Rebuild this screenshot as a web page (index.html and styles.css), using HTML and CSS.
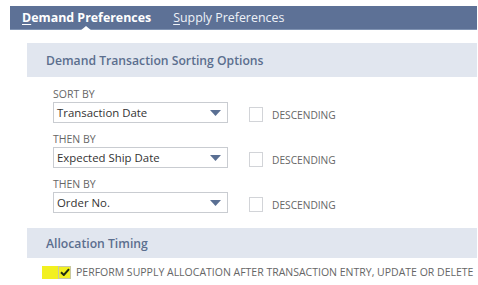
FILE: index.html
```html
<!DOCTYPE html>
<html>
<head>
<meta charset="utf-8">
<link rel="stylesheet" href="styles.css">
</head>
<body>
<div class="page">
  <div class="tabs">
    <div class="tab active"><u>D</u>emand Preferences</div>
    <div class="tab"><u>S</u>upply Preferences</div>
  </div>
  <div class="content">
    <div class="section-head">Demand Transaction Sorting Options</div>
    <div class="rows">
      <div class="row">
        <div class="field">
          <div class="label">SORT BY</div>
          <div class="select"><span>Transaction Date</span><svg class="arrow" width="11" height="6" viewBox="0 0 11 6"><path d="M0 0H11L5.5 6Z" fill="#5a6f93"/></svg></div>
        </div>
        <label class="check"><span class="box"></span>DESCENDING</label>
      </div>
      <div class="row">
        <div class="field">
          <div class="label">THEN BY</div>
          <div class="select"><span>Expected Ship Date</span><svg class="arrow" width="11" height="6" viewBox="0 0 11 6"><path d="M0 0H11L5.5 6Z" fill="#5a6f93"/></svg></div>
        </div>
        <label class="check"><span class="box"></span>DESCENDING</label>
      </div>
      <div class="row">
        <div class="field">
          <div class="label">THEN BY</div>
          <div class="select"><span>Order No.</span><svg class="arrow" width="11" height="6" viewBox="0 0 11 6"><path d="M0 0H11L5.5 6Z" fill="#5a6f93"/></svg></div>
        </div>
        <label class="check"><span class="box"></span>DESCENDING</label>
      </div>
    </div>
    <div class="section-head alloc">Allocation Timing</div>
    <div class="perform">
      <span class="hl"></span>
      <span class="box checked"><svg width="10" height="8" viewBox="0 0 10 8"><path d="M1 4.2L3.8 7L9 1.2" fill="none" stroke="#1f2a12" stroke-width="2"/></svg></span>
      <span class="ptext">PERFORM SUPPLY ALLOCATION AFTER TRANSACTION ENTRY, UPDATE OR DELETE</span>
    </div>
  </div>
</div>
</body>
</html>
```
FILE: styles.css
```css
html, body {
  margin: 0;
  padding: 0;
  background: #fff;
}
body {
  font-family: "Open Sans", "Liberation Sans", sans-serif;
  width: 478px;
  height: 285px;
  overflow: hidden;
}
.page {
  padding-top: 6px;
  padding-left: 10px;
}
.tabs {
  height: 24px;
  background: #5d7196;
  border-bottom: 1px solid #8093b2;
  box-sizing: border-box;
  display: flex;
  align-items: center;
  padding-left: 12px;
  gap: 22px;
  margin-right: 1px;
}
.tab {
  color: #eef2f8;
  font-size: 12.4px;
  line-height: 24px;
  position: relative;
}
.tab u {
  text-decoration: underline;
  text-underline-offset: 2px;
}
.tab.active {
  color: #fff;
  font-weight: 700;
}
.tab.active::after {
  content: "";
  position: absolute;
  left: 58px;
  bottom: -1px;
  width: 0;
  height: 0;
  border-left: 6px solid transparent;
  border-right: 6px solid transparent;
  border-bottom: 5px solid #fff;
}
.content {
  padding-top: 13px;
  padding-left: 17px;
}
.section-head {
  height: 34px;
  background: #e1e6ef;
  color: #5b6e8e;
  font-size: 12.2px;
  font-weight: 600;
  display: flex;
  align-items: center;
  padding-left: 19px;
  margin-right: 1px;
}
.rows {
  padding-left: 26px;
  padding-top: 11px;
  display: flex;
  flex-direction: column;
  gap: 10px;
}
.row {
  display: flex;
  align-items: flex-end;
  gap: 21px;
}
.label {
  font-size: 10.5px;
  color: #666;
  line-height: 13px;
  height: 13px;
}
.select {
  width: 175px;
  height: 21px;
  box-sizing: border-box;
  border: 1px solid #c9ccd1;
  display: flex;
  align-items: center;
  justify-content: space-between;
  padding: 0 6px 0 3px;
  font-size: 11.4px;
  color: #333;
  margin-top: 1px;
}
.arrow {
  display: block;
}
.check {
  display: flex;
  align-items: center;
  font-size: 10.2px;
  color: #666;
  gap: 9px;
  height: 21px;
  margin-bottom: -2px;
}
.box {
  width: 14px;
  height: 15px;
  box-sizing: border-box;
  border: 1px solid #d2d4d8;
  background: #fff;
  display: inline-block;
}
.section-head.alloc {
  margin-top: 15px;
  height: 30px;
}
.perform {
  position: relative;
  display: flex;
  align-items: center;
  padding-left: 31px;
  padding-top: 7px;
  gap: 5px;
}
.hl {
  position: absolute;
  left: 15px;
  top: 8px;
  width: 28px;
  height: 13px;
  background: #f2f020;
}
.box.checked {
  position: relative;
  width: 13px;
  height: 13px;
  border-color: #c8c8a0;
  background: transparent;
  display: flex;
  align-items: center;
  justify-content: center;
}
.ptext {
  font-size: 10.5px;
  color: #666;
  position: relative;
}
```
